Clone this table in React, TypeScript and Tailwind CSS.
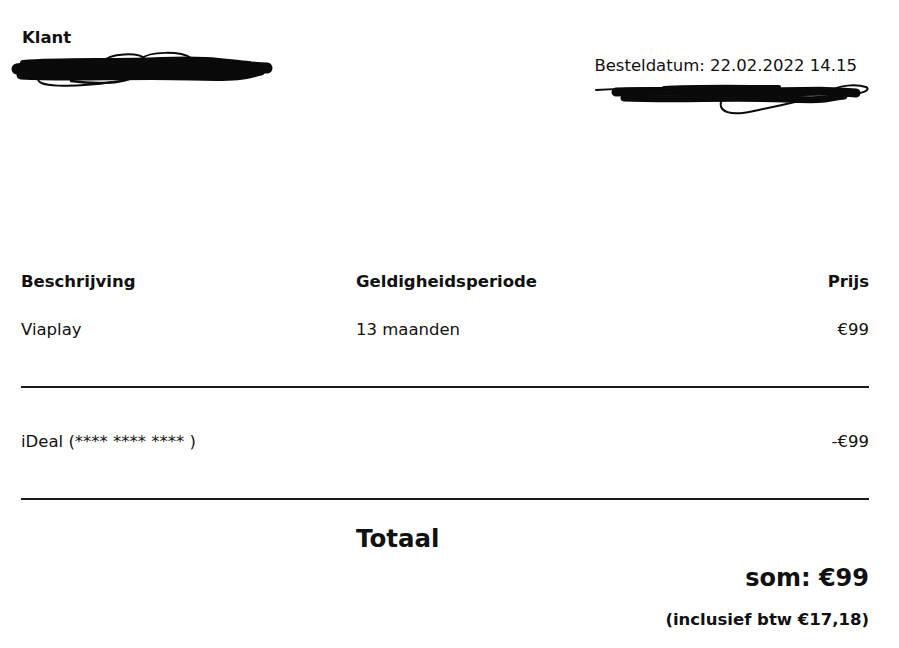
const font = { fontFamily: '"DejaVu Sans", Verdana, sans-serif' };

const ScribbleLeft = () => (
  <svg width="262" height="40" viewBox="0 0 262 40" fill="none" stroke="#0a0a0a" strokeLinecap="round" strokeLinejoin="round">
    <path d="M6 19 C 40 14, 90 16, 130 16 S 220 15, 256 18" strokeWidth="11" />
    <path d="M10 25 C 60 28, 120 24, 180 26 S 238 23, 250 21" strokeWidth="9" />
    <path d="M12 13 C 50 10, 100 12, 150 10 S 215 12, 238 14" strokeWidth="6" />
    <path d="M40 22 C 90 21, 160 21, 230 20" strokeWidth="8" />
    <path d="M92 12 C 98 3, 128 2, 134 9" strokeWidth="2" />
    <path d="M130 9 C 138 1, 170 1, 180 8 S 200 10, 215 11" strokeWidth="2" />
    <path d="M28 28 C 22 37, 60 38, 102 32" strokeWidth="2" />
    <path d="M60 31 C 90 35, 110 32, 118 29" strokeWidth="2.5" />
  </svg>
);

const ScribbleRight = () => (
  <svg width="278" height="36" viewBox="0 0 278 36" fill="none" stroke="#0a0a0a" strokeLinecap="round" strokeLinejoin="round">
    <path d="M2 9 C 20 8, 40 7, 60 7" strokeWidth="2" />
    <path d="M22 11 C 70 9, 130 12, 180 11 S 240 10, 262 12" strokeWidth="9" />
    <path d="M30 17 C 80 19, 140 16, 190 18 S 230 17, 250 15" strokeWidth="7" />
    <path d="M70 7 C 100 5, 150 6, 185 6" strokeWidth="4" />
    <path d="M236 10 C 245 4, 262 3, 272 6 C 278 9, 266 14, 256 12" strokeWidth="2" />
    <path d="M128 18 C 122 32, 138 35, 160 30 S 198 22, 210 19" strokeWidth="2" />
    <path d="M200 12 C 215 8, 228 9, 238 13" strokeWidth="2" />
  </svg>
);

export default function App() {
  return (
    <div className="w-[899px] h-[648px] bg-white text-[#111] pl-[21px] pr-[30px] overflow-hidden" style={font}>
      <div className="h-[272px] flex justify-between items-start">
        <div className="pt-[28px] pl-[1px]">
          <div className="text-[16.5px] leading-[20px] font-bold">Klant</div>
          <div className="-ml-[11px] mt-[2px]">
            <ScribbleLeft />
          </div>
        </div>
        <div className="pt-[56px] flex flex-col items-end">
          <div className="text-[16.5px] leading-[20px] mr-[12px]">Besteldatum: 22.02.2022 14.15</div>
          <div className="-mr-[3px] mt-[5px]">
            <ScribbleRight />
          </div>
        </div>
      </div>

      <div className="grid grid-cols-[335px_1fr_auto] text-[16.5px] leading-[20px]">
        <div className="font-bold">Beschrijving</div>
        <div className="font-bold">Geldigheidsperiode</div>
        <div className="font-bold text-right">Prijs</div>
        <div className="mt-[28px]">Viaplay</div>
        <div className="mt-[28px]">13 maanden</div>
        <div className="mt-[28px] text-right">€99</div>
      </div>

      <div className="mt-[46px] h-[2px] bg-[#1a1a1a]" />

      <div className="mt-[44px] flex justify-between text-[16.5px] leading-[20px]">
        <span>iDeal (**** **** **** )</span>
        <span>-€99</span>
      </div>

      <div className="mt-[46px] h-[2px] bg-[#1a1a1a]" />

      <div className="mt-[25px] pl-[335px] text-[24.5px] leading-[28px] font-bold">Totaal</div>
      <div className="mt-[11px] text-right text-[24px] leading-[28px] font-bold">som: €99</div>
      <div className="mt-[18px] text-right text-[16.5px] leading-[20px] font-bold">(inclusief btw €17,18)</div>
    </div>
  );
}
